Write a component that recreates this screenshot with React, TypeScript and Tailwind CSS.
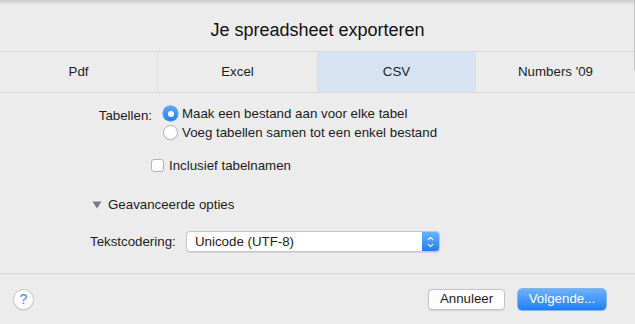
import { ChevronDown, ChevronUp } from "lucide-react";

const tabs = ["Pdf", "Excel", "CSV", "Numbers '09"];

function Radio({ checked }: { checked?: boolean }) {
  if (checked) {
    return (
      <span className="flex h-[15px] w-[15px] items-center justify-center rounded-full bg-gradient-to-b from-[#5aa6fb] to-[#1e7ff6] shadow-[0_0_0_0.5px_#2a78d8]">
        <span className="h-[6px] w-[6px] rounded-full bg-white" />
      </span>
    );
  }
  return (
    <span className="h-[15px] w-[15px] rounded-full border border-[#b3b3b3] bg-white shadow-[0_0.5px_1px_rgba(0,0,0,0.08)]" />
  );
}

export default function App() {
  return (
    <div className="relative flex h-[324px] w-[635px] flex-col overflow-hidden bg-[#ececec] font-['Liberation_Sans',Arial,sans-serif] text-[13.3px] text-[#1c1c1c]">
      {/* window top shadow */}
      <div className="pointer-events-none absolute inset-x-0 top-0 h-[5px] bg-gradient-to-b from-[#c9c9c9] to-transparent" />
      <div className="pointer-events-none absolute right-0 top-0 h-[70px] w-[1px] bg-[#c4c4c4]" />

      <div className="flex h-[51px] items-center justify-center pt-[9px] text-[18px] text-[#111]">
        Je spreadsheet exporteren
      </div>

      {/* Tabs */}
      <div className="grid h-[42px] grid-cols-[157px_160px_158px_1fr] border-y border-[#dadada]">
        {tabs.map((t, i) => (
          <div
            key={t}
            className={`flex items-center justify-center ${i > 0 ? "border-l border-[#dedede]" : ""} ${
              t === "CSV" ? "bg-[#d6e3f3]" : ""
            }`}
          >
            {t}
          </div>
        ))}
      </div>

      {/* Options */}
      <div className="flex flex-1 flex-col pt-[11px]">
        <div className="flex">
          <div className="w-[152px] pt-[2px] text-right">Tabellen:</div>
          <div className="ml-[11px] flex flex-col">
            <div className="flex h-[19px] items-center gap-[4px]">
              <Radio checked />
              <span>Maak een bestand aan voor elke tabel</span>
            </div>
            <div className="flex h-[19px] items-center gap-[4px]">
              <Radio />
              <span>Voeg tabellen samen tot een enkel bestand</span>
            </div>
          </div>
        </div>

        <div className="ml-[151px] mt-[14px] flex h-[19px] items-center gap-[5px]">
          <span className="h-[13px] w-[13px] rounded-[3px] border border-[#b3b3b3] bg-white" />
          <span>Inclusief tabelnamen</span>
        </div>

        <div className="ml-[92px] mt-[20px] flex h-[19px] items-center gap-[6px]">
          <svg width="10" height="8" viewBox="0 0 10 8">
            <path d="M0.5 0.5 L9.5 0.5 L5 7.5 Z" fill="#7a7a7a" />
          </svg>
          <span>Geavanceerde opties</span>
        </div>

        <div className="ml-[90px] mt-[17px] flex h-[21px] items-center">
          <span className="w-[96px]">Tekstcodering:</span>
          <div className="flex h-[21px] w-[254px] items-stretch overflow-hidden rounded-[4px] border border-[#c6c6c6] bg-white shadow-[0_0.5px_1px_rgba(0,0,0,0.1)]">
            <span className="flex flex-1 items-center pl-[8px]">Unicode (UTF-8)</span>
            <span className="flex w-[17px] flex-col items-center justify-center bg-gradient-to-b from-[#6ab2fb] to-[#1b7ff5] text-white">
              <ChevronUp size={9} strokeWidth={3} className="-mb-[1px]" />
              <ChevronDown size={9} strokeWidth={3} className="-mt-[1px]" />
            </span>
          </div>
        </div>
      </div>

      {/* Footer */}
      <div className="flex h-[51px] items-center border-t border-[#d6d6d6] pl-[13px] pr-[29px]">
        <div className="flex h-[21px] w-[21px] items-center justify-center rounded-full border border-[#c8c8c8] bg-white text-[14px] text-[#3a8cf0] shadow-[0_0.5px_1px_rgba(0,0,0,0.12)]">
          ?
        </div>
        <div className="ml-auto flex gap-[13px]">
          <button className="flex h-[21px] w-[77px] items-center justify-center rounded-[4px] border border-[#c3c3c3] bg-white text-[13.3px] text-[#1c1c1c] shadow-[0_0.5px_1px_rgba(0,0,0,0.1)]">
            Annuleer
          </button>
          <button className="flex h-[21px] w-[88px] items-center justify-center rounded-[4px] bg-gradient-to-b from-[#6bb2fb] to-[#1a7ff6] text-[13.3px] text-white shadow-[0_0_0_0.5px_#2a78d8]">
            Volgende...
          </button>
        </div>
      </div>
    </div>
  );
}
